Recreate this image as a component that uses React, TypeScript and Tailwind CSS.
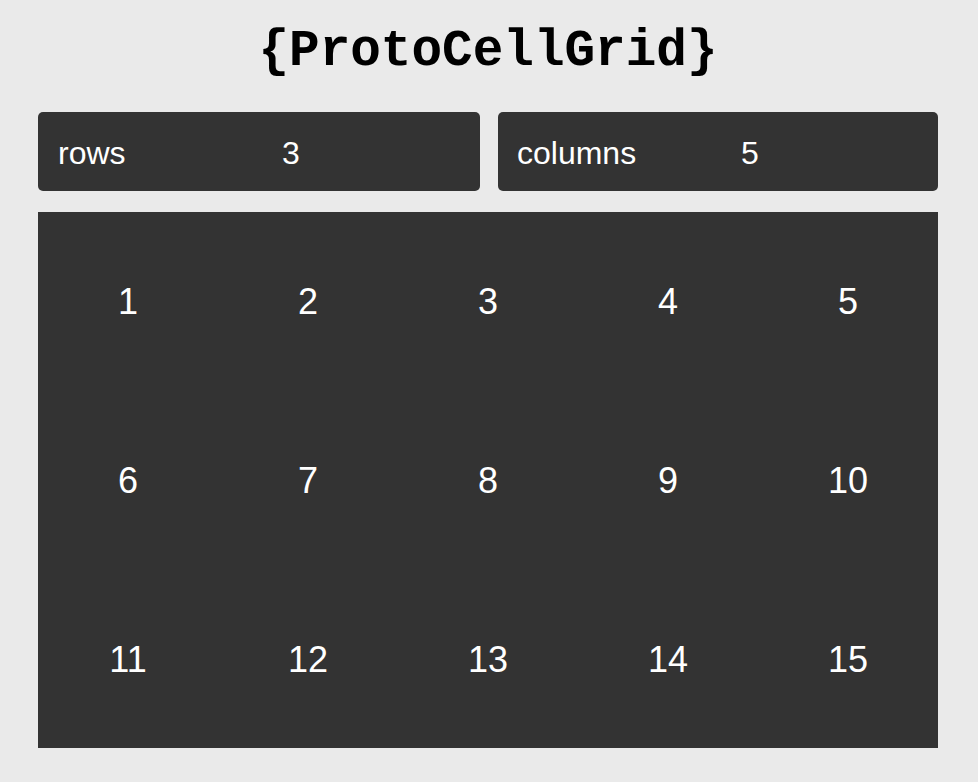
import { useState } from 'react';

export default function App() {
  const [rows, setRows] = useState(3);
  const [cols, setCols] = useState(5);
  const cells = Array.from({ length: rows * cols }, (_, i) => i + 1);

  return (
    <div className="min-h-[782px] bg-[#eaeaea] pb-[34px]" style={{ fontFamily: '"Liberation Sans", Arial, sans-serif' }}>
      <div className="ml-[38px] w-[900px]">
        <h1
          className="h-[112px] pb-[8px] flex items-center justify-center text-[51px] font-bold text-black"
          style={{ fontFamily: '"Courier New", "Liberation Mono", monospace' }}
        >
          {'{ProtoCellGrid}'}
        </h1>

        {/* Controls */}
        <div className="flex gap-[18px]">
          <label className="w-[442px] h-[79px] bg-[#333333] rounded-[5px] flex items-center pl-[20px] pt-[2px] text-white text-[32px]">
            <span className="w-[224px]">rows</span>
            <input
              type="number"
              value={rows}
              onChange={(e) => setRows(Math.max(1, parseInt(e.target.value) || 1))}
              className="w-[120px] bg-transparent outline-none text-white appearance-none"
            />
          </label>
          <label className="flex-1 h-[79px] bg-[#333333] rounded-[5px] flex items-center pl-[19px] pt-[2px] text-white text-[32px]">
            <span className="w-[224px]">columns</span>
            <input
              type="number"
              value={cols}
              onChange={(e) => setCols(Math.max(1, parseInt(e.target.value) || 1))}
              className="w-[120px] bg-transparent outline-none text-white appearance-none"
            />
          </label>
        </div>

        {/* Grid */}
        <div
          className="mt-[21px] h-[536px] bg-[#333333] grid text-white text-[36px]"
          style={{ gridTemplateColumns: `repeat(${cols}, 1fr)`, gridTemplateRows: `repeat(${rows}, 1fr)` }}
        >
          {cells.map((n) => (
            <div key={n} className="flex items-center justify-center pt-[2px]">
              {n}
            </div>
          ))}
        </div>
      </div>
    </div>
  );
}
